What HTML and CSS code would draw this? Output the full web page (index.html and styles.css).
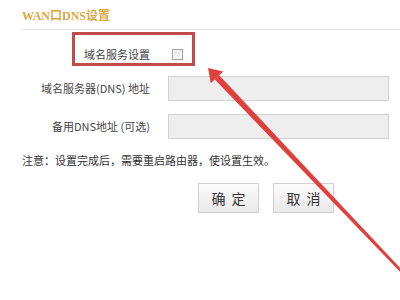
FILE: index.html
```html
<!DOCTYPE html>
<html lang="zh-CN">
<head>
    <meta charset="UTF-8">
    <title>WAN口DNS设置</title>
    <link rel="stylesheet" href="styles.css">
</head>
<body>

    <div class="page">
        <h2 class="title">WAN口DNS设置</h2>

        <div class="form">
            <div class="row row-check">
                <label class="label" for="dnsOn">域名服务设置</label>
                <input type="checkbox" id="dnsOn" class="check">
            </div>
            <div class="row row-first">
                <label class="label" for="dns1">域名服务器(DNS) 地址</label>
                <input type="text" id="dns1" class="field" disabled>
            </div>
            <div class="row">
                <label class="label" for="dns2">备用DNS地址 (可选)</label>
                <input type="text" id="dns2" class="field" disabled>
            </div>
        </div>

        <p class="note">注意：设置完成后，需要重启路由器，使设置生效。</p>

        <div class="buttons">
            <button class="btn">确定</button>
            <button class="btn">取消</button>
        </div>

        <!-- annotation -->
        <div class="mark"></div>
        <svg class="arrow" width="400" height="300" viewBox="0 0 400 300">
            <polygon points="208,68 223.2,71.5 210.8,83.3" fill="#e0403d"/>
            <polygon points="214.8,79.5 219.2,75.3 415.9,284.6 414.1,286.4" fill="#e0403d"/>
        </svg>
    </div>

</body>
</html>
```

FILE: styles.css
```css
body {
    margin: 0;
    background: #fff;
    font-family: "Noto Sans CJK SC", sans-serif;
    font-size: 11px;
    color: #444;
}
.page {
    position: relative;
    width: 400px;
    height: 300px;
    overflow: hidden;
}
.title {
    margin: 0 0 0 22px;
    padding: 8px 0 5px;
    font-family: "Liberation Serif", "Noto Sans CJK SC", serif;
    font-size: 12px;
    font-weight: bold;
    line-height: 16px;
    color: #dba845;
    border-bottom: 1px solid #e4e4e4;
}
.form {
    padding-top: 12px;
}
.row {
    display: flex;
    align-items: center;
    height: 24px;
    margin-bottom: 14px;
}
.row-check {
    margin-bottom: 10px;
}
.label {
    width: 150px;
    text-align: right;
    margin-right: 18px;
}
.check {
    width: 11px;
    height: 11px;
    margin: 0 0 0 4px;
    appearance: none;
    border: 1px solid #a0a0a0;
    background: linear-gradient(#e6e6e6, #f8f8f8);
    box-shadow: inset 0 0 0 1px #fff;
}
.field {
    box-sizing: border-box;
    width: 221px;
    height: 25px;
    margin: 0;
    border: 1px solid #d2d2d2;
    background: #eeeeee;
}
.note {
    margin: 4px 0 0 22px;
    line-height: 16px;
    color: #333;
}
.buttons {
    display: flex;
    gap: 14px;
    padding-left: 198px;
    margin-top: 15px;
}
.btn {
    width: 61px;
    height: 30px;
    padding: 0 0 0 6px;
    border: 1px solid #d0d0d0;
    background: linear-gradient(#fbfbfb, #e9e9e9);
    font-family: "Noto Sans CJK SC", sans-serif;
    font-size: 14px;
    letter-spacing: 6px;
    color: #333;
}
.mark {
    position: absolute;
    left: 72px;
    top: 32px;
    width: 123px;
    height: 34px;
    box-sizing: border-box;
    border: 3px solid #c24a4a;
}
.arrow {
    position: absolute;
    left: 0;
    top: 0;
}
```
